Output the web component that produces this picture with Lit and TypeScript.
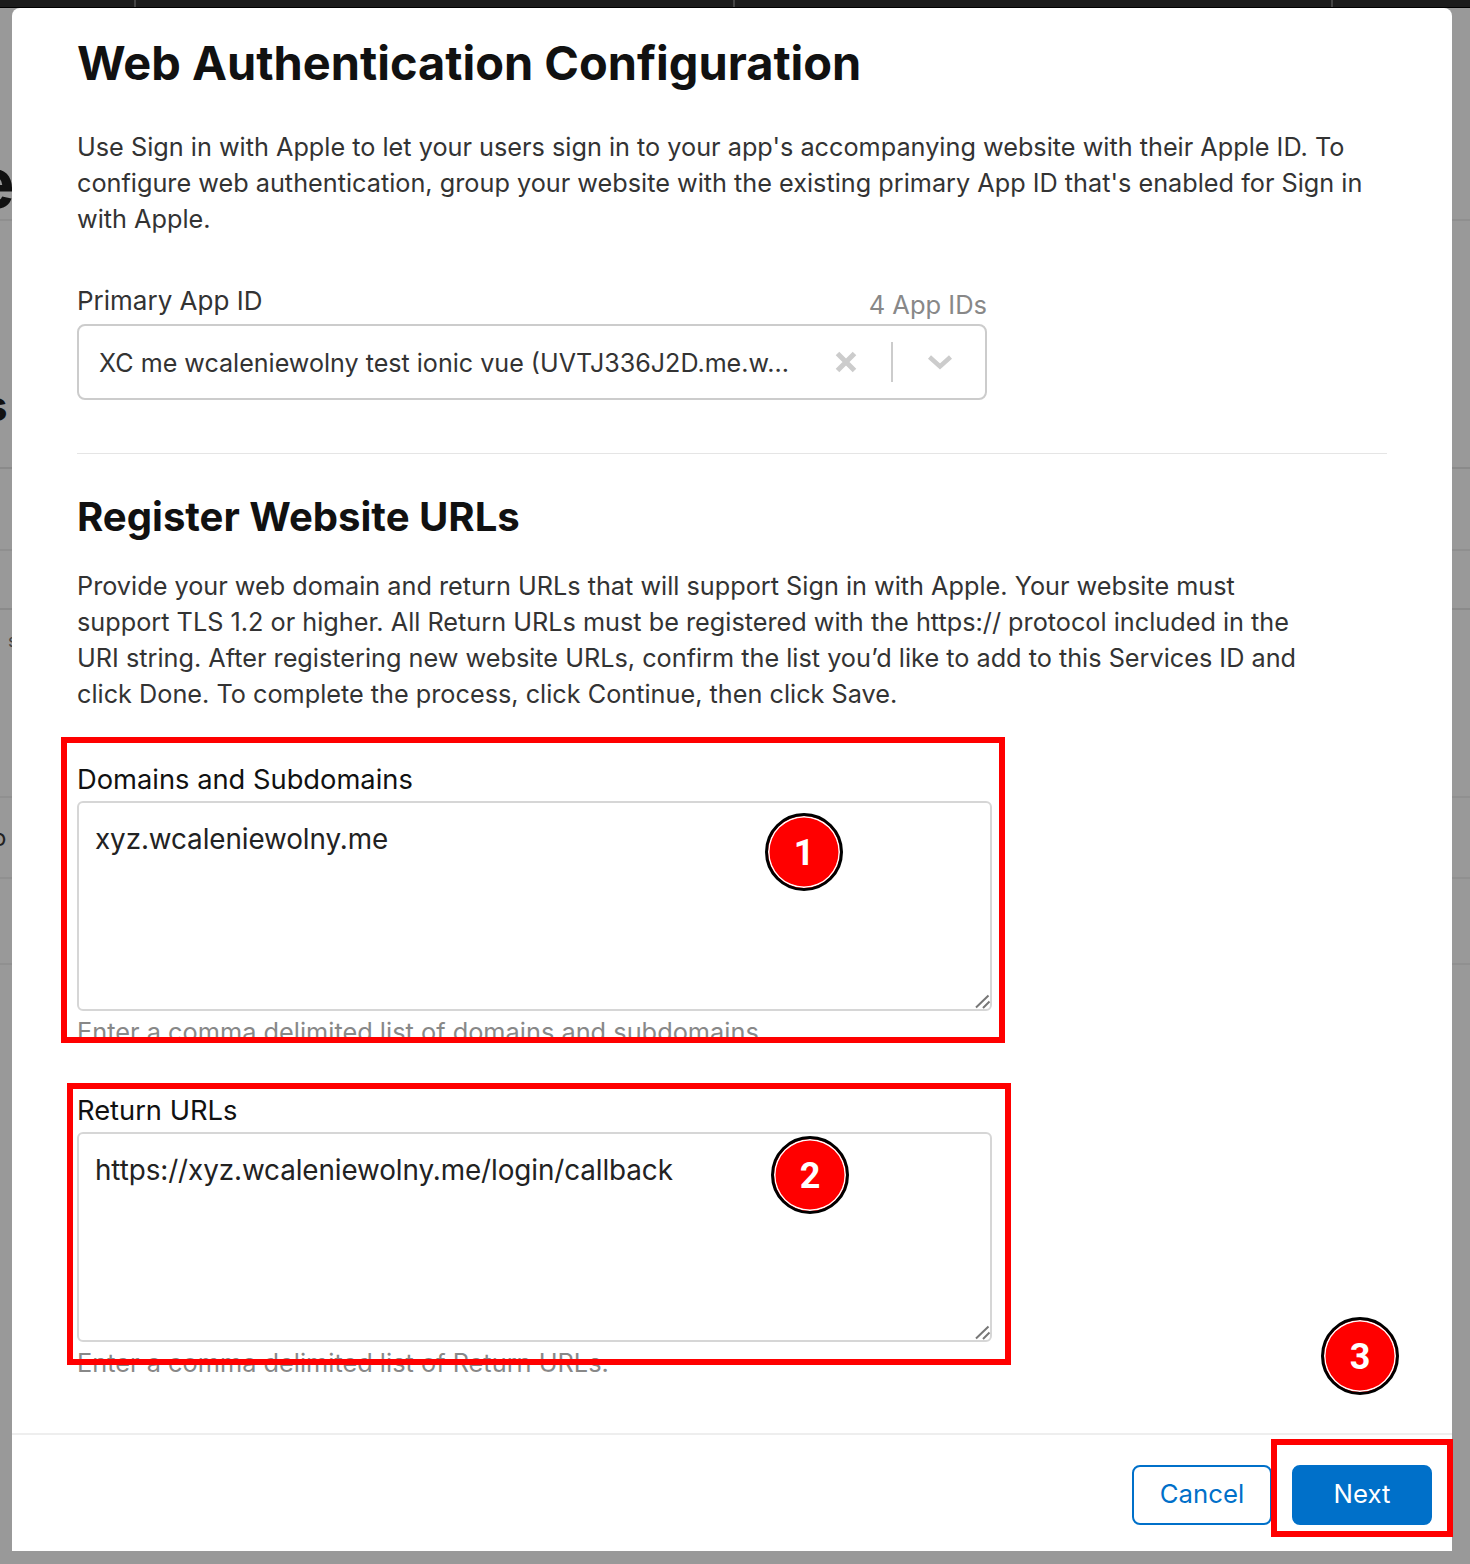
import { LitElement, html, css } from "lit";
import { customElement } from "lit/decorators.js";

const BG_LINES = [
  { y: 219, c: "#8f8f8f" },
  { y: 467, c: "#8a8a8a" },
  { y: 549, c: "#8f8f8f" },
  { y: 608, c: "#8a8a8a" },
  { y: 796, c: "#909090" },
  { y: 877, c: "#909090" },
  { y: 963, c: "#909090" },
];

@customElement("app-root")
export class AppRoot extends LitElement {
  static styles = css`
    :host {
      display: block;
      position: relative;
      width: 1470px;
      height: 1564px;
      overflow: hidden;
      background: #999;
      font-family: Inter, "Liberation Sans", sans-serif;
      color: #333;
    }
    * { box-sizing: border-box; }
    .topbar {
      height: 8px;
      background: #1c1c1c;
      border-bottom: 1px solid #000;
      display: flex;
    }
    .topbar i { width: 2px; background: #444; height: 7px; }
    .topbar i:nth-child(1) { margin-left: 134px; }
    .topbar i:nth-child(2) { margin-left: 597px; }
    .topbar i:nth-child(3) { margin-left: 596px; }
    .bgline { position: absolute; left: 0; width: 100%; height: 2px; }
    .bgtext { position: absolute; color: #111; font-weight: 700; line-height: 1; }
    .bg-e { left: -27px; top: 148px; font-size: 70px; }
    .bg-s1 { left: -16px; top: 385px; font-size: 42px; }
    .bg-s2 { left: 8px; top: 632px; font-size: 18px; font-weight: 400; color: #444; }
    .bg-o { left: -8px; top: 826px; font-size: 24px; font-weight: 400; color: #222; }
    .modal {
      position: relative;
      width: 1440px;
      height: 1543px;
      margin-left: 12px;
      background: #fff;
      border-radius: 8px 8px 0 0;
      display: flex;
      flex-direction: column;
    }
    .body { flex: 1; padding: 22px 65px 0 65px; }
    h1 {
      margin: 0;
      font-size: 46.95px;
      line-height: 66px;
      font-weight: 700;
      color: #111;
    }
    p {
      margin: 0;
      font-size: 25.25px;
      line-height: 36px;
      font-weight: 400;
      color: #333;
    }
    .intro { margin-top: 33px; }
    .sel-head {
      width: 910px;
      margin-top: 46px;
      display: flex;
      justify-content: space-between;
      align-items: flex-end;
      height: 36px;
    }
    .sel-label { font-size: 26px; line-height: 36px; color: #333; }
    .sel-count { font-size: 25.5px; line-height: 28px; color: #888; }
    .select {
      width: 910px;
      height: 76px;
      margin-top: 5px;
      border: 2px solid #ccc;
      border-radius: 8px;
      display: flex;
      align-items: center;
      padding: 2px 0 0 20px;
    }
    .select > * { flex: none; }
    .sel-val { width: 722px; font-size: 25.1px; color: #333; white-space: nowrap; }
    .sel-x { width: 50px; display: flex; justify-content: center; margin-top: -2px; }
    .sel-sep { width: 2px; height: 40px; background: #ccc; margin: -2px 0 0 20px; }
    .sel-chev { width: 90px; display: flex; justify-content: center; margin: -2px 0 0 2px; }
    hr {
      margin: 53px 0 0;
      border: 0;
      height: 1px;
      background: #e5e5e5;
    }
    h2 {
      margin: 33px 0 0;
      font-size: 40.1px;
      line-height: 60px;
      font-weight: 700;
      color: #111;
    }
    .reg { margin-top: 21px; width: 1260px; }
    .field { width: 915px; }
    .f1 { margin-top: 50px; }
    .f2 { margin-top: 43px; }
    .field label {
      display: block;
      font-size: 27.3px;
      line-height: 36px;
      color: #111;
    }
    .ta { position: relative; margin-top: 3px; height: 210px; }
    textarea {
      display: block;
      width: 915px;
      height: 210px;
      margin: 0;
      padding: 17px 16px;
      border: 2px solid #d6d6d6;
      border-radius: 6px;
      background: #fff;
      font: 400 27.85px/38px Inter, "Liberation Sans", sans-serif;
      color: #222;
      outline: none;
      resize: none;
      letter-spacing: -0.1px;
    }
    .grip { position: absolute; right: 1px; bottom: 2px; display: block; }
    .hint {
      margin-top: 3px;
      font-size: 25.35px;
      line-height: 36px;
      color: #888;
    }
    footer {
      height: 118px;
      border-top: 2px solid #eee;
      display: flex;
      justify-content: flex-end;
      align-items: flex-start;
      gap: 20px;
      padding: 30px 20px 0 0;
    }
    button {
      width: 140px;
      height: 60px;
      border-radius: 8px;
      border: 2px solid #0070c9;
      font: 400 25.75px Inter, "Liberation Sans", sans-serif;
      padding: 0 0 3px;
    }
    .cancel { background: #fff; color: #0070c9; }
    .next { background: #0070c9; color: #fff; }
    .redbox { position: absolute; border: 6px solid #f00; pointer-events: none; }
    .rb1 { left: 61px; top: 737px; width: 944px; height: 306px; }
    .rb2 { left: 67px; top: 1083px; width: 944px; height: 282px; }
    .rb3 { left: 1271px; top: 1439px; width: 182px; height: 98px; }
    .badge {
      position: absolute;
      width: 78px;
      height: 78px;
      border-radius: 50%;
      background: #f00;
      border: 3px solid #000;
      box-shadow: inset 0 0 0 1.5px #fff;
      color: #fff;
      font: 700 36px/75px Roboto, Inter, sans-serif;
      text-align: center;
    }
    .b1 { left: 765px; top: 813px; }
    .b2 { left: 771px; top: 1136px; }
    .b3 { left: 1321px; top: 1317px; }
  `;

  private grip() {
    return html`<svg class="grip" width="16" height="15" viewBox="0 0 16 15"><path d="M1 13.5 13.5 1.5M8 14 14.5 7.5" stroke="#777" stroke-width="2" fill="none"/></svg>`;
  }

  render() {
    return html`
      ${BG_LINES.map(
        (l) => html`<div class="bgline" style="top:${l.y}px;background:${l.c}"></div>`
      )}
      <div class="bgtext bg-e">e</div>
      <div class="bgtext bg-s1">s</div>
      <div class="bgtext bg-s2">s</div>
      <div class="bgtext bg-o">o</div>
      <div class="topbar"><i></i><i></i><i></i></div>
      <div class="modal">
        <div class="body">
          <h1>Web Authentication Configuration</h1>
          <p class="intro">
            Use Sign in with Apple to let your users sign in to your app's accompanying website with their Apple ID. To<br />
            configure web authentication, group your website with the existing primary App ID that's enabled for Sign in<br />
            with Apple.
          </p>
          <div class="sel-head">
            <span class="sel-label">Primary App ID</span>
            <span class="sel-count">4 App IDs</span>
          </div>
          <div class="select">
            <span class="sel-val">XC me wcaleniewolny test ionic vue (UVTJ336J2D.me.w...</span>
            <span class="sel-x">
              <svg width="22" height="22" viewBox="0 0 22 22"><path d="M2.5 2.5 19.5 19.5M19.5 2.5 2.5 19.5" stroke="#ccc" stroke-width="5" fill="none"/></svg>
            </span>
            <span class="sel-sep"></span>
            <span class="sel-chev">
              <svg width="26" height="16" viewBox="0 0 26 16"><path d="M2.5 3 13 12.5 23.5 3" stroke="#ccc" stroke-width="4.5" fill="none"/></svg>
            </span>
          </div>
          <hr />
          <h2>Register Website URLs</h2>
          <p class="reg">
            Provide your web domain and return URLs that will support Sign in with Apple. Your website must<br />
            support TLS 1.2 or higher. All Return URLs must be registered with the https:// protocol included in the<br />
            URI string. After registering new website URLs, confirm the list you’d like to add to this Services ID and<br />
            click Done. To complete the process, click Continue, then click Save.
          </p>
          <div class="field f1">
            <label>Domains and Subdomains</label>
            <div class="ta">
              <textarea spellcheck="false">xyz.wcaleniewolny.me</textarea>
              ${this.grip()}
            </div>
            <div class="hint">Enter a comma delimited list of domains and subdomains</div>
          </div>
          <div class="field f2">
            <label>Return URLs</label>
            <div class="ta">
              <textarea spellcheck="false">https://xyz.wcaleniewolny.me/login/callback</textarea>
              ${this.grip()}
            </div>
            <div class="hint">Enter a comma delimited list of Return URLs.</div>
          </div>
        </div>
        <footer>
          <button class="cancel">Cancel</button>
          <button class="next">Next</button>
        </footer>
      </div>
      <div class="redbox rb1"></div>
      <div class="redbox rb2"></div>
      <div class="redbox rb3"></div>
      <div class="badge b1">1</div>
      <div class="badge b2">2</div>
      <div class="badge b3">3</div>
    `;
  }
}
